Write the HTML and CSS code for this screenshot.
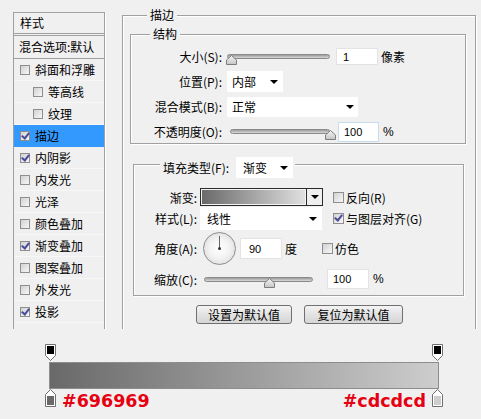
FILE: index.html
```html
<!DOCTYPE html>
<html>
<head>
<meta charset="utf-8">
<link rel="stylesheet" href="styles.css">
</head>
<body>
<div class="top">
  <div class="styles-panel">
    <div class="sp-head">样式</div>
    <div class="sp-blend">混合选项:默认</div>
    <div class="sp-item"><span class="cb"></span>斜面和浮雕</div>
    <div class="sp-item sub"><span class="cb"></span>等高线</div>
    <div class="sp-item sub"><span class="cb"></span>纹理</div>
    <div class="sp-item active"><span class="cb on"></span>描边</div>
    <div class="sp-item"><span class="cb on"></span>内阴影</div>
    <div class="sp-item"><span class="cb"></span>内发光</div>
    <div class="sp-item"><span class="cb"></span>光泽</div>
    <div class="sp-item"><span class="cb"></span>颜色叠加</div>
    <div class="sp-item"><span class="cb on"></span>渐变叠加</div>
    <div class="sp-item"><span class="cb"></span>图案叠加</div>
    <div class="sp-item"><span class="cb"></span>外发光</div>
    <div class="sp-item"><span class="cb on"></span>投影</div>
  </div>

  <div class="grp outer">
    <div class="grp-title">描边</div>

    <div class="grp inner1">
      <div class="grp-title t1">结构</div>
      <div class="form1">
        <div class="lbl">大小(S):</div>
        <div class="ctl">
          <div class="slider s-size">
            <div class="track"></div>
            <svg class="thumb" width="11" height="10" viewBox="0 0 11 10"><defs><linearGradient id="tg1" x1="0" y1="0" x2="0" y2="1"><stop offset="0" stop-color="#f6f6f6"/><stop offset="1" stop-color="#c4c4c4"/></linearGradient></defs><path d="M5.5 0.5 L10.5 5 V9.5 H0.5 V5 Z" fill="url(#tg1)" stroke="#7d7d7d"/></svg>
          </div>
          <div class="inp i-size">1</div>
          <span class="unit">像素</span>
        </div>

        <div class="lbl">位置(P):</div>
        <div class="ctl">
          <div class="sel sel-pos"><span>内部</span><span class="arr"></span></div>
        </div>

        <div class="lbl">混合模式(B):</div>
        <div class="ctl">
          <div class="sel sel-blend"><span>正常</span><span class="arr"></span></div>
        </div>

        <div class="lbl">不透明度(O):</div>
        <div class="ctl">
          <div class="slider s-op">
            <div class="track"></div>
            <svg class="thumb" width="11" height="10" viewBox="0 0 11 10"><defs><linearGradient id="tg2" x1="0" y1="0" x2="0" y2="1"><stop offset="0" stop-color="#f6f6f6"/><stop offset="1" stop-color="#c4c4c4"/></linearGradient></defs><path d="M5.5 0.5 L10.5 5 V9.5 H0.5 V5 Z" fill="url(#tg2)" stroke="#7d7d7d"/></svg>
          </div>
          <div class="inp i-op">100</div>
          <span class="pct">%</span>
        </div>
      </div>
    </div>

    <div class="grp inner2">
      <div class="grp-title t2">
        <span>填充类型(F):</span>
        <div class="sel sel-fill"><span>渐变</span><span class="arr"></span></div>
      </div>

      <div class="row2 r-grad">
        <div class="lbl2">渐变:</div>
        <div class="gpick"><div class="gprev"></div><div class="garr"><span class="arr"></span></div></div>
        <span class="cb m c-rev"></span><span class="cbl">反向(R)</span>
      </div>

      <div class="row2 r-style">
        <div class="lbl2">样式(L):</div>
        <div class="sel sel-style"><span>线性</span><span class="arr"></span></div>
        <span class="cb m on c-align"></span><span class="cbl">与图层对齐(G)</span>
      </div>

      <div class="row2 r-angle">
        <div class="lbl2">角度(A):</div>
        <div class="dial"></div>
        <div class="inp i-ang">90</div>
        <span class="deg">度</span>
        <span class="cb m c-dith"></span><span class="cbl">仿色</span>
      </div>

      <div class="row2 r-scale">
        <div class="lbl2">缩放(C):</div>
        <div class="slider s-scale">
          <div class="track"></div>
          <svg class="thumb" width="11" height="10" viewBox="0 0 11 10"><defs><linearGradient id="tg3" x1="0" y1="0" x2="0" y2="1"><stop offset="0" stop-color="#f6f6f6"/><stop offset="1" stop-color="#c4c4c4"/></linearGradient></defs><path d="M5.5 0.5 L10.5 5 V9.5 H0.5 V5 Z" fill="url(#tg3)" stroke="#7d7d7d"/></svg>
        </div>
        <div class="inp i-scale">100</div>
        <span class="pct">%</span>
      </div>
    </div>

    <div class="buttons">
      <div class="btn b1">设置为默认值</div>
      <div class="btn b2">复位为默认值</div>
    </div>
  </div>
</div>

<div class="grad">
  <div class="stops-top">
    <svg width="11" height="17" viewBox="0 0 11 17"><path d="M0.5 0.5 H10.5 V11.5 L5.5 16.5 L0.5 11.5 Z" fill="#fff" stroke="#6f6f6f"/><rect x="2" y="2" width="7" height="8" fill="#000"/></svg>
    <svg width="11" height="17" viewBox="0 0 11 17"><path d="M0.5 0.5 H10.5 V11.5 L5.5 16.5 L0.5 11.5 Z" fill="#fff" stroke="#6f6f6f"/><rect x="2" y="2" width="7" height="8" fill="#000"/></svg>
  </div>
  <div class="bar"></div>
  <div class="stops-bottom">
    <div class="sgrp">
      <svg width="11" height="18" viewBox="0 0 11 18"><path d="M5.5 0.5 L10.5 5.5 V17.5 H0.5 V5.5 Z" fill="#fff" stroke="#6f6f6f"/><rect x="2" y="7" width="7" height="9" fill="#696969"/></svg>
      <span class="hex">#696969</span>
    </div>
    <div class="sgrp">
      <span class="hex">#cdcdcd</span>
      <svg width="11" height="18" viewBox="0 0 11 18"><path d="M5.5 0.5 L10.5 5.5 V17.5 H0.5 V5.5 Z" fill="#fff" stroke="#6f6f6f"/><rect x="2" y="7" width="7" height="9" fill="#cdcdcd"/></svg>
    </div>
  </div>
</div>
</body>
</html>
```

FILE: styles.css
```css
* { box-sizing: border-box; }
html, body { margin: 0; padding: 0; }
body {
  background: #f0f0f0;
  width: 481px;
  height: 419px;
  overflow: hidden;
  font-family: "Noto Sans CJK SC", "DejaVu Sans", sans-serif;
  font-size: 12px;
  color: #000;
}

.top {
  display: flex;
  align-items: flex-start;
  height: 329px;
  overflow: hidden;
}

/* left styles list */
.styles-panel {
  flex: none;
  margin: 12px 0 0 13px;
  width: 92px;
  border: 1px solid #a0a0a0;
  box-shadow: 1px 1px 0 #fff;
  padding-bottom: 30px;
}
.sp-head {
  height: 23px;
  line-height: 20px;
  padding-left: 6px;
  border-bottom: 3px double #a0a0a0;
}
.sp-blend {
  height: 23px;
  line-height: 22px;
  padding-left: 5px;
  border-bottom: 1px solid #a0a0a0;
  white-space: nowrap;
}
.sp-item {
  height: 22px;
  display: flex;
  align-items: center;
  padding-left: 6px;
  border-bottom: 1px solid #f7f7f7;
  white-space: nowrap;
}
.sp-item.sub { padding-left: 19px; }
.sp-item.active { background: #3399ff; border-bottom-color: #3399ff; }
.sp-item .cb { margin-right: 5px; }

/* checkbox */
.cb {
  flex: none;
  position: relative;
  width: 10px;
  height: 10px;
  border: 1px solid #8e8e8e;
  background: linear-gradient(135deg, #d2d2d2, #f7f7f7);
}
.cb.m { width: 11px; height: 11px; }
.cb.on::after {
  content: "";
  position: absolute;
  left: 2px;
  top: -1px;
  width: 3px;
  height: 6px;
  border: solid #4a4a9a;
  border-width: 0 2px 2px 0;
  transform: rotate(38deg);
}
.cbl { margin-left: 2px; white-space: nowrap; }

/* group boxes */
.grp {
  border: 1px solid #a0a0a0;
  box-shadow: inset 1px 1px 0 #fff, 1px 1px 0 #fff;
}
.grp-title {
  width: fit-content;
  background: #f0f0f0;
  padding: 0 3px;
  height: 16px;
  line-height: 16px;
  margin-top: -9px;
  margin-left: 17px;
}
.outer {
  flex: none;
  margin: 15px 0 0 17px;
  width: 354px;
  padding: 0 0 30px 7px;
}
.inner1 {
  width: 336px;
  margin-top: 11px;
  padding-bottom: 1px;
}
.t1 { margin-left: 19px; }

.form1 {
  display: grid;
  grid-template-columns: 91px 1fr;
  column-gap: 5px;
  row-gap: 4px;
  grid-auto-rows: 21px;
  margin-top: 4px;
}
.lbl {
  text-align: right;
  line-height: 21px;
  white-space: nowrap;
}
.ctl {
  display: flex;
  align-items: center;
}

/* sliders */
.slider {
  position: relative;
  height: 21px;
  flex: none;
}
.track {
  position: absolute;
  left: 2px;
  right: 0;
  top: 8px;
  height: 5px;
  border: 1px solid #8a8a8a;
  border-radius: 3px;
  background: linear-gradient(to bottom, #9b9b9b, #d9d9d9);
}
.thumb {
  position: absolute;
  top: 9px;
}
.s-size { margin-left: -2px; width: 105px; }
.s-size .thumb { left: 1px; }
.s-op { margin-left: 3px; width: 106px; }
.s-op .track { left: 0; right: 6px; }
.s-op .thumb { right: 0; }

/* inputs */
.inp {
  flex: none;
  background: #fff;
  border: 1px solid #e3e3e3;
  font-family: "Liberation Sans", "DejaVu Sans", sans-serif;
  font-size: 11px;
  padding-left: 5px;
  display: flex;
  align-items: center;
}
.i-size { margin-left: 6px; width: 42px; height: 17px; padding-left: 6px; }
.i-op { margin-left: 2px; width: 41px; height: 20px; border-color: #c9dbee; }
.unit { margin-left: 3px; }
.pct { margin-left: 4px; font-family: "Liberation Sans", sans-serif; font-size: 12px; }

/* selects */
.sel {
  flex: none;
  display: flex;
  align-items: center;
  justify-content: space-between;
  background: #fff;
  padding: 0 5px;
}
.arr {
  width: 0;
  height: 0;
  border-left: 4px solid transparent;
  border-right: 4px solid transparent;
  border-top: 4px solid #000;
}
.sel-pos { width: 56px; height: 21px; }
.sel-blend { width: 131px; height: 20px; padding-right: 4px; }
.sel-fill { width: 57px; height: 21px; padding-left: 7px; }
.sel-style { width: 122px; height: 23px; padding-left: 7px; }

/* second group */
.inner2 {
  width: 331px;
  margin: 20px 0 0 3px;
  padding-bottom: 5px;
}
.t2 {
  display: flex;
  align-items: center;
  gap: 7px;
  height: 21px;
  line-height: 21px;
  margin-top: -8px;
  margin-left: 26px;
  padding: 0 2px 0 3px;
}
.row2 {
  display: flex;
  align-items: center;
}
.lbl2 {
  flex: none;
  width: 63px;
  margin-right: 3px;
  text-align: right;
  white-space: nowrap;
}
.r-grad { margin-top: 10px; height: 18px; }
.r-style { margin-top: 1px; height: 23px; }
.r-angle { margin-top: 2px; height: 33px; }
.r-scale { margin-top: 3px; height: 22px; }

.gpick {
  flex: none;
  display: flex;
  width: 123px;
  height: 18px;
  border: 1px solid #2b2b2b;
}
.gprev {
  flex: 1;
  border: 1px solid #f4f4f4;
  background: linear-gradient(to right, #6a6a6a, #e0e0e0);
}
.garr {
  width: 16px;
  border-left: 1px solid #2b2b2b;
  background: #efefef;
  display: flex;
  align-items: center;
  justify-content: center;
}
.c-rev { margin-left: 10px; }
.c-align { margin-left: 11px; }

.dial {
  flex: none;
  position: relative;
  margin-left: 3px;
  width: 33px;
  height: 33px;
  border-radius: 50%;
  border: 1px solid #8c8c8c;
  background: radial-gradient(circle, #ffffff 0, #f3f3f3 45%, #d3d3d3 100%);
}
.dial::before {
  content: "";
  position: absolute;
  left: 15px;
  top: 3px;
  width: 1px;
  height: 13px;
  background: #666;
}
.dial::after {
  content: "";
  position: absolute;
  left: 14px;
  top: 14px;
  width: 3px;
  height: 3px;
  border-radius: 50%;
  background: #333;
}
.i-ang { margin-left: 4px; width: 42px; height: 21px; padding-left: 8px; }
.deg { margin-left: 3px; }
.c-dith { margin-left: 25px; }

.s-scale { margin-left: 2px; width: 111px; }
.s-scale .thumb { left: 62px; }
.i-scale { margin-left: 14px; width: 42px; height: 20px; }

/* buttons */
.buttons {
  display: flex;
  gap: 12px;
  margin: 9px 0 0 66px;
}
.btn {
  height: 19px;
  line-height: 17px;
  text-align: center;
  border: 1px solid #707070;
  border-radius: 3px;
  background: linear-gradient(to bottom, #f4f4f4, #e2e2e2 50%, #d6d6d6);
}
.b1 { width: 96px; }
.b2 { width: 99px; }

/* gradient section */
.grad { padding-top: 15px; }
.stops-top {
  display: flex;
  justify-content: space-between;
  margin-left: 45px;
  width: 398px;
  height: 17px;
}
.stops-top svg, .stops-bottom svg { display: block; }
.bar {
  margin: 1px 0 0 49px;
  width: 390px;
  height: 27px;
  border: 1px solid #8d8d8d;
  background: linear-gradient(to right, #696969, #cdcdcd);
}
.stops-bottom {
  display: flex;
  justify-content: space-between;
  align-items: flex-start;
  margin-left: 45px;
  width: 398px;
}
.sgrp {
  display: flex;
  align-items: flex-start;
  gap: 6px;
}
.hex {
  color: #e60012;
  font-family: "DejaVu Sans", sans-serif;
  font-weight: bold;
  font-size: 17.5px;
  line-height: 22px;
  margin-top: 1px;
}
```
